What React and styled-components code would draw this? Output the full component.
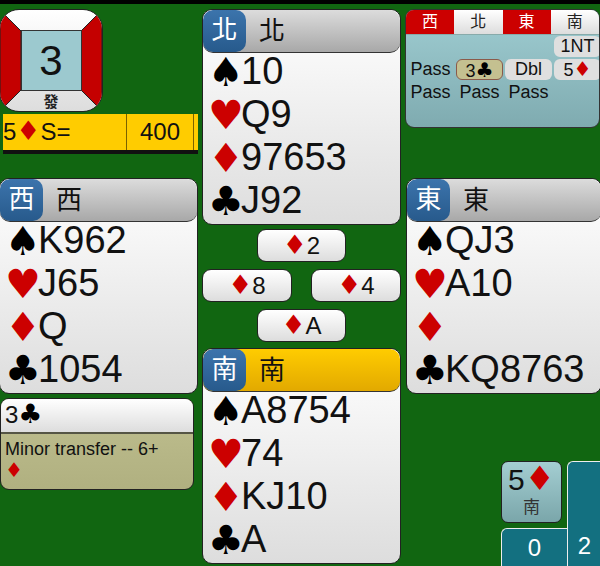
import React from "react";
import styled, { createGlobalStyle } from "styled-components";

const RED = "#cc0000";
const FONT = `"Liberation Sans", "Noto Sans CJK TC", sans-serif`;

const GlobalStyle = createGlobalStyle`
  html, body { margin: 0; padding: 0; background: #116611; }
  body { font-family: ${FONT}; color: #111; }
`;

const Table = styled.div`
  width: 600px;
  height: 566px;
  box-sizing: border-box;
  border-top: 4px solid #000;
  background: #116611;
  overflow: hidden;
  display: grid;
  grid-template-columns: 202px 204px 194px;
  padding-top: 5px;
`;

const Column = styled.div`
  display: flex;
  flex-direction: column;
  min-width: 0;
`;

const LeftColumn = styled(Column)`
  margin-left: -1px;
`;

const Suit = styled.span`
  font-family: "DejaVu Sans", sans-serif;
  font-size: 1.12em;
  line-height: 1;
  color: ${(p) => (p.$red ? RED : "#000")};
`;

// dealer + vulnerability square
const Dealer = styled.div`
  position: relative;
  width: 104px;
  height: 103px;
  box-sizing: border-box;
  border: 1px solid #222;
  border-radius: 20px;
  overflow: hidden;
  background: linear-gradient(#fff, #ddd);
  display: flex;
  align-items: center;
  justify-content: center;
`;

const DealerFrame = styled.svg`
  position: absolute;
  left: 0;
  top: 0;
`;

const DealerCentre = styled.div`
  position: relative;
  width: 61px;
  height: 61px;
  box-sizing: border-box;
  border: 1px solid #333;
  background: #9cc9cf;
  font-size: 42px;
  display: flex;
  align-items: center;
  justify-content: center;
`;

const DealerLabel = styled.div`
  position: absolute;
  left: 0;
  right: 0;
  bottom: 1px;
  text-align: center;
  font-size: 15px;
  line-height: 17px;
  font-weight: 700;
  color: #222;
`;

const ScoreLine = styled.div`
  margin: 2px 0 0 4px;
  width: 195px;
  height: 40px;
  box-sizing: border-box;
  background: #ffcc00;
  border-bottom: 4px solid #111;
  display: grid;
  grid-template-columns: 124px 67px 4px;
  font-size: 24px;
  line-height: 36px;
`;

const ScoreCell = styled.div`
  text-align: ${(p) => (p.$center ? "center" : "left")};
  border-right: ${(p) => (p.$last ? "none" : "1px solid #7a6200")};
  white-space: nowrap;
`;

const Hand = styled.div`
  box-sizing: border-box;
  flex: none;
  width: ${(p) => p.$width || "199px"};
  height: 216px;
  margin-top: ${(p) => p.$top || 0};
  border: 1px solid #222;
  border-radius: 10px;
  background: linear-gradient(#fff, #ddd);
  overflow: hidden;
`;

const HandHeader = styled.div`
  height: 43px;
  box-sizing: border-box;
  border: 1px solid #333;
  border-width: 0 0 1px 0;
  border-radius: 10px;
  background: ${(p) =>
    p.$active
      ? "linear-gradient(#ffcc00, #e2a900)"
      : "linear-gradient(#dcdcdc, #a8a8a8)"};
  display: flex;
  align-items: center;
  font-size: 26px;
`;

const Seat = styled.div`
  width: 43px;
  height: 42px;
  border-radius: 10px;
  background: linear-gradient(#3c74ac, #275a8c);
  color: #fff;
  text-align: center;
  line-height: 40px;
`;

const SeatName = styled.div`
  margin-left: 13px;
  line-height: 40px;
`;

const SuitRow = styled.div`
  height: 43px;
  display: flex;
  align-items: center;
  font-size: 38px;
  margin-top: ${(p) => (p.$first ? "-3px" : 0)};
  padding-left: 5px;
`;

const SuitMark = styled(Suit)`
  width: 33px;
  flex: none;
  font-size: 40px;
`;

const Tricks = styled.div`
  height: 119px;
  width: 199px;
  display: flex;
  flex-wrap: wrap;
  justify-content: space-between;
  align-content: flex-start;
  padding-top: 4px;
  row-gap: 7px;
`;

const PlayedCard = styled.div`
  box-sizing: border-box;
  width: 90px;
  height: 33px;
  border: 1px solid #222;
  border-radius: 9px;
  background: linear-gradient(#fff, #ddd);
  font-size: 24px;
  line-height: 31px;
  text-align: center;
  ${(p) => p.$wide && "margin: 0 55px;"}
`;

const Auction = styled.div`
  box-sizing: border-box;
  width: 195px;
  height: 119px;
  margin-left: -1px;
  border: 1px solid #333;
  border-radius: 9px;
  overflow: hidden;
  background: linear-gradient(#9fcdd2, #7fabb0);
`;

const AuctionHead = styled.div`
  display: grid;
  grid-template-columns: repeat(4, 1fr);
  height: 24px;
  border-bottom: 1px solid #8aa;
`;

const AuctionSeat = styled.div`
  background: ${(p) => (p.$red ? RED : "linear-gradient(#fff, #ddd)")};
  color: ${(p) => (p.$red ? "#fff" : "#222")};
  font-size: 16px;
  line-height: 23px;
  text-align: center;
`;

const BidGrid = styled.div`
  display: grid;
  grid-template-columns: repeat(4, 49px);
  grid-auto-rows: 23px;
  padding-top: 1px;
  font-size: 18px;
`;

const Bid = styled.div`
  box-sizing: border-box;
  width: 47px;
  height: 21px;
  margin-left: 1px;
  line-height: 20px;
  text-align: center;
  border-radius: 6px;
  background: ${(p) => (p.$alert ? "#c4c090" : p.$plain ? "transparent" : "#dfdfdf")};
  border: ${(p) => (p.$alert ? "1px solid #8a5a4a" : "none")};
  white-space: nowrap;
`;

const Explain = styled.div`
  margin: 4px 0 0 1px;
  width: 194px;
  height: 92px;
  box-sizing: border-box;
  border: 1px solid #222;
  border-radius: 9px;
  overflow: hidden;
  background: linear-gradient(#c0c090, #b0b080);
`;

const ExplainHead = styled.div`
  height: 33px;
  padding-left: 4px;
  border-bottom: 2px solid #554;
  background: linear-gradient(#fff, #ddd);
  font-size: 24px;
  line-height: 32px;
`;

const ExplainText = styled.div`
  padding: 4px 4px;
  font-size: 18px;
  line-height: 22px;
`;

const Footer = styled.div`
  margin-top: 67px;
  margin-left: 95px;
  display: grid;
  grid-template-columns: 66px 34px;
  grid-template-rows: 67px 38px;
`;

const Contract = styled.div`
  box-sizing: border-box;
  width: 61px;
  height: 62px;
  border: 1px solid #222;
  border-radius: 7px;
  background: linear-gradient(#a4ced2, #7aa6aa);
  text-align: center;
  font-size: 30px;
  line-height: 36px;
`;

const ContractSeat = styled.div`
  font-size: 17px;
  line-height: 20px;
  color: #333;
`;

const TrickCount = styled.div`
  box-sizing: border-box;
  background: #137080;
  color: #fff;
  border: 1px solid #eee;
  border-width: 1px 0 0 1px;
  border-radius: 6px 0 0 0;
  font-size: 24px;
  display: flex;
  align-items: ${(p) => (p.$tall ? "flex-end" : "center")};
  justify-content: center;
  padding-bottom: ${(p) => (p.$tall ? "6px" : 0)};
  line-height: 28px;
  ${(p) => p.$tall && "grid-row: 1 / 3; grid-column: 2;"}
`;

const SUITS = [
  { mark: "♠" },
  { mark: "♥", red: true },
  { mark: "♦", red: true },
  { mark: "♣" },
];

function PlayerHand({ seat, cards, active, width, top }) {
  return (
    <Hand $width={width} $top={top}>
      <HandHeader $active={active}>
        <Seat>{seat}</Seat>
        <SeatName>{seat}</SeatName>
      </HandHeader>
      {SUITS.map((s, i) => (
        <SuitRow key={s.mark} $first={i === 0}>
          <SuitMark $red={s.red}>{s.mark}</SuitMark>
          {cards[i]}
        </SuitRow>
      ))}
    </Hand>
  );
}

const Dia = () => <Suit $red>♦</Suit>;

export default function App() {
  return (
    <Table>
      <GlobalStyle />
      <LeftColumn>
        <Dealer>
          <DealerFrame width="102" height="101" viewBox="0 0 102 101">
            <polygon points="0,0 21,21 21,80 0,101" fill="#c40000" stroke="#222" />
            <polygon points="102,0 81,21 81,80 102,101" fill="#c40000" stroke="#222" />
          </DealerFrame>
          <DealerCentre>3</DealerCentre>
          <DealerLabel>發</DealerLabel>
        </Dealer>
        <ScoreLine>
          <ScoreCell>
            5<Dia />S=
          </ScoreCell>
          <ScoreCell $center>400</ScoreCell>
          <ScoreCell $last />
        </ScoreLine>
        <PlayerHand seat="西" cards={["K962", "J65", "Q", "1054"]} top="24px" />
        <Explain>
          <ExplainHead>
            3<Suit>♣</Suit>
          </ExplainHead>
          <ExplainText>
            Minor transfer -- 6+
            <br />
            <Dia />
          </ExplainText>
        </Explain>
      </LeftColumn>

      <Column>
        <PlayerHand seat="北" cards={["10", "Q9", "97653", "J92"]} />
        <Tricks>
          <PlayedCard $wide>
            <Dia />2
          </PlayedCard>
          <PlayedCard>
            <Dia />8
          </PlayedCard>
          <PlayedCard>
            <Dia />4
          </PlayedCard>
          <PlayedCard $wide>
            <Dia />A
          </PlayedCard>
        </Tricks>
        <PlayerHand seat="南" cards={["A8754", "74", "KJ10", "A"]} active />
      </Column>

      <Column>
        <Auction>
          <AuctionHead>
            <AuctionSeat $red>西</AuctionSeat>
            <AuctionSeat>北</AuctionSeat>
            <AuctionSeat $red>東</AuctionSeat>
            <AuctionSeat>南</AuctionSeat>
          </AuctionHead>
          <BidGrid>
            <Bid $plain />
            <Bid $plain />
            <Bid $plain />
            <Bid>1NT</Bid>
            <Bid $plain>Pass</Bid>
            <Bid $alert>
              3<Suit>♣</Suit>
            </Bid>
            <Bid>Dbl</Bid>
            <Bid>
              5<Dia />
            </Bid>
            <Bid $plain>Pass</Bid>
            <Bid $plain>Pass</Bid>
            <Bid $plain>Pass</Bid>
          </BidGrid>
        </Auction>
        <PlayerHand seat="東" cards={["QJ3", "A10", "", "KQ8763"]} top="50px" width="196px" />
        <Footer>
          <Contract>
            5<Dia />
            <ContractSeat>南</ContractSeat>
          </Contract>
          <TrickCount $tall>2</TrickCount>
          <TrickCount>0</TrickCount>
        </Footer>
      </Column>
    </Table>
  );
}
